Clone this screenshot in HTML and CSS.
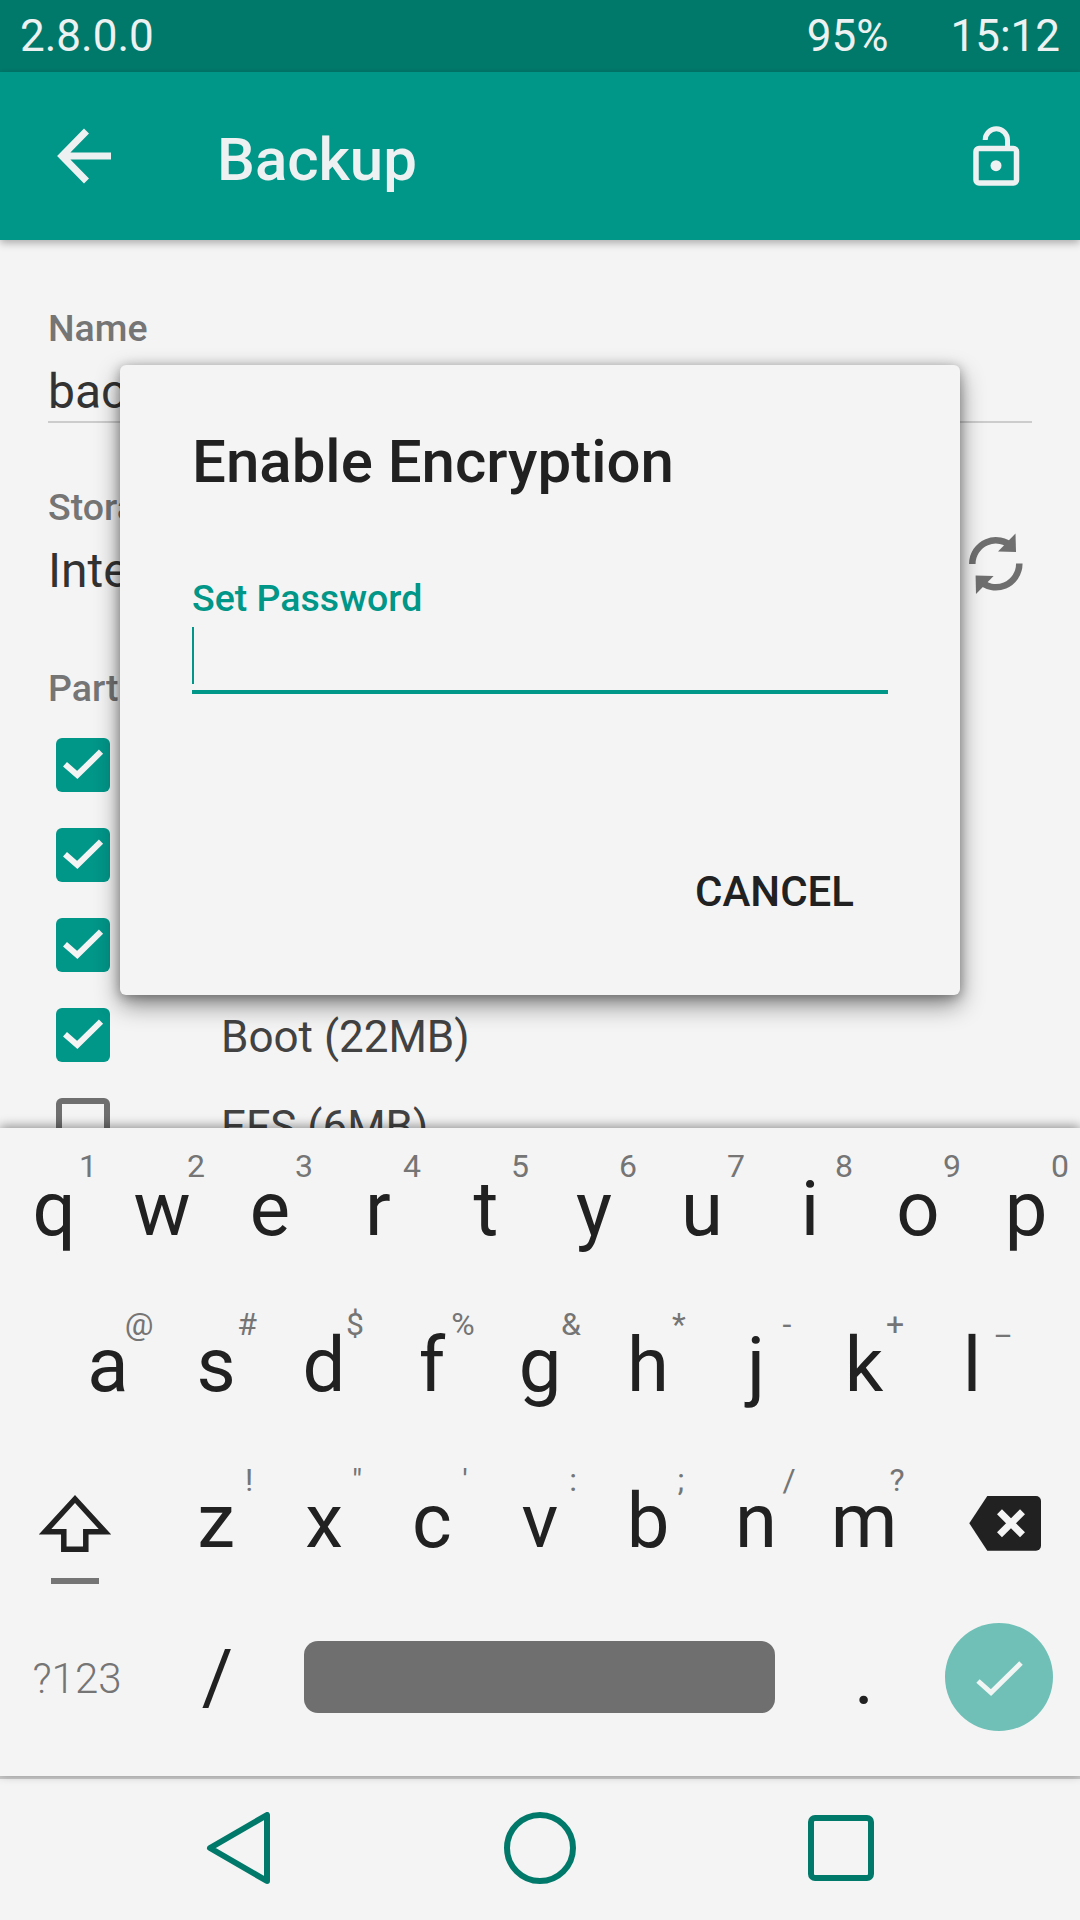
FILE: index.html
```html
<!DOCTYPE html>
<html lang="en">
<head>
    <meta charset="UTF-8">
    <meta name="viewport" content="width=device-width, initial-scale=1.0">
    <title>Backup</title>
    <link rel="stylesheet" href="styles.css">
</head>
<body>
    <div class="screen">
        <div class="status-bar">
            <span class="status-version">2.8.0.0</span>
            <span class="status-battery">95%</span>
            <span>15:12</span>
        </div>

        <header class="toolbar">
            <svg class="toolbar-icon" viewBox="0 0 100 100">
                <path d="M71 46H22M46.5 21L22 46L46.5 71" fill="none" stroke="#eef1f1" stroke-width="7"/>
            </svg>
            <h1 class="toolbar-title">Backup</h1>
            <svg class="toolbar-icon" viewBox="0 0 100 100">
                <rect x="26" y="38.5" width="40.5" height="34.5" rx="3" fill="none" stroke="#eef1f1" stroke-width="5.5"/>
                <path d="M35.2 30A11.15 11.15 0 0 1 57.5 30V37" fill="none" stroke="#eef1f1" stroke-width="5"/>
                <circle cx="46" cy="55.7" r="5.5" fill="#eef1f1"/>
            </svg>
        </header>

        <main class="content">
            <div class="label">Name</div>
            <div class="value name-value">backup</div>

            <div class="label storage-label">Storage</div>
            <div class="storage-row">
                <div class="value">Internal Storage</div>
                <svg class="refresh-icon" viewBox="0 0 100 100">
                    <path d="M27.3 49A23.5 23.5 0 0 1 67.4 32.2" fill="none" stroke="#6f6f6f" stroke-width="6.5"/>
                    <path d="M70.5 18.5L71 37L53 36.5Z" fill="#6f6f6f"/>
                    <path d="M74.3 48.6A23.5 23.5 0 0 1 34.2 65.4" fill="none" stroke="#6f6f6f" stroke-width="6.5"/>
                    <path d="M31 79L30.6 60.6L48.6 61Z" fill="#6f6f6f"/>
                </svg>
            </div>

            <div class="label partitions-label">Partitions</div>
            <ul class="partition-list">
                <li class="partition"><span class="checkbox checked"><svg viewBox="0 0 54 54"><path d="M9 26.3L21.3 37L45 13.7"/></svg></span></li>
                <li class="partition"><span class="checkbox checked"><svg viewBox="0 0 54 54"><path d="M9 26.3L21.3 37L45 13.7"/></svg></span></li>
                <li class="partition"><span class="checkbox checked"><svg viewBox="0 0 54 54"><path d="M9 26.3L21.3 37L45 13.7"/></svg></span></li>
                <li class="partition"><span class="checkbox checked"><svg viewBox="0 0 54 54"><path d="M9 26.3L21.3 37L45 13.7"/></svg></span><span class="partition-name">Boot (22MB)</span></li>
                <li class="partition"><span class="checkbox"></span><span class="partition-name">EFS (6MB)</span></li>
            </ul>
        </main>

        <section class="keyboard">
            <div class="key-row key-row-top">
                <div class="key">q<span class="hint">1</span></div>
                <div class="key">w<span class="hint">2</span></div>
                <div class="key">e<span class="hint">3</span></div>
                <div class="key">r<span class="hint">4</span></div>
                <div class="key">t<span class="hint">5</span></div>
                <div class="key">y<span class="hint">6</span></div>
                <div class="key">u<span class="hint">7</span></div>
                <div class="key">i<span class="hint">8</span></div>
                <div class="key">o<span class="hint">9</span></div>
                <div class="key">p<span class="hint">0</span></div>
            </div>
            <div class="key-row key-row-home">
                <div class="key">a<span class="hint">@</span></div>
                <div class="key">s<span class="hint">#</span></div>
                <div class="key">d<span class="hint">$</span></div>
                <div class="key">f<span class="hint">%</span></div>
                <div class="key">g<span class="hint">&amp;</span></div>
                <div class="key">h<span class="hint">*</span></div>
                <div class="key">j<span class="hint">-</span></div>
                <div class="key">k<span class="hint">+</span></div>
                <div class="key">l<span class="hint">_</span></div>
            </div>
            <div class="key-row key-row-bottom">
                <div class="key key-wide key-shift">
                    <svg width="110" height="120" viewBox="0 0 110 120">
                        <path d="M55 19L25 51.8H43.8V69.2H65.8V51.8H85Z" fill="none" stroke="#212121" stroke-width="5.5" stroke-miterlimit="10"/>
                        <rect x="31" y="98" width="48" height="6" fill="#757575"/>
                    </svg>
                </div>
                <div class="key">z<span class="hint">!</span></div>
                <div class="key">x<span class="hint">"</span></div>
                <div class="key">c<span class="hint">'</span></div>
                <div class="key">v<span class="hint">:</span></div>
                <div class="key">b<span class="hint">;</span></div>
                <div class="key">n<span class="hint">/</span></div>
                <div class="key">m<span class="hint">?</span></div>
                <div class="key key-wide key-delete">
                    <svg width="110" height="90" viewBox="0 0 110 90">
                        <path d="M19.3 43.3L37.3 16H86A5 5 0 0 1 91 21V65.7A5 5 0 0 1 86 70.7H37.3Z" fill="#212121"/>
                        <path d="M49.5 31.8L72.5 54.8M72.5 31.8L49.5 54.8" stroke="#f4f4f4" stroke-width="7"/>
                    </svg>
                </div>
            </div>
            <div class="key-row">
                <div class="key key-wide key-symbols">?123</div>
                <div class="key key-slash">/</div>
                <div class="key key-space"><div class="space-bar"></div></div>
                <div class="key">.</div>
                <div class="key key-wide">
                    <div class="enter-button">
                        <svg width="108" height="108" viewBox="0 0 108 108">
                            <path d="M33 58L46 69.5L76 40" fill="none" stroke="#f1f5f4" stroke-width="5"/>
                        </svg>
                    </div>
                </div>
            </div>
        </section>

        <nav class="nav-bar">
            <div class="nav-item">
                <svg width="72" height="72" viewBox="0 0 72 72"><path d="M8 36L65 3V69Z"/></svg>
            </div>
            <div class="nav-item">
                <svg width="72" height="72" viewBox="0 0 72 72"><circle cx="36" cy="36" r="33"/></svg>
            </div>
            <div class="nav-item">
                <svg width="72" height="72" viewBox="0 0 72 72"><rect x="5" y="6" width="60" height="60" rx="4"/></svg>
            </div>
        </nav>

        <div class="dialog">
            <h2 class="dialog-title">Enable Encryption</h2>
            <label class="dialog-label">Set Password</label>
            <div class="dialog-input"><span class="caret"></span></div>
            <div class="dialog-actions">
                <span class="dialog-button">CANCEL</span>
            </div>
        </div>
    </div>
</body>
</html>
```

FILE: styles.css
```css
* {
    box-sizing: border-box;
}

html, body {
    margin: 0;
    padding: 0;
    background: #f4f4f4;
}

.screen {
    position: relative;
    display: flex;
    flex-direction: column;
    width: 1080px;
    height: 1920px;
    overflow: hidden;
    font-family: Roboto, "Noto Sans", sans-serif;
    color: #212121;
}

/* Status bar */
.status-bar {
    display: flex;
    align-items: center;
    height: 72px;
    padding: 0 20px;
    background: #00796b;
    color: #eef1f1;
    font-size: 44px;
}

.status-version {
    margin-right: auto;
}

.status-battery {
    margin-right: 62px;
}

/* Toolbar */
.toolbar {
    position: relative;
    z-index: 2;
    display: flex;
    align-items: center;
    height: 168px;
    padding: 8px 30px 0 40px;
    background: #009688;
    box-shadow: 0 3px 8px rgba(0, 0, 0, 0.3);
}

.toolbar-icon {
    width: 100px;
    height: 100px;
    flex: none;
}

.toolbar-title {
    flex: 1;
    margin: 0 0 2px 77px;
    color: #eef1f1;
    font-size: 60px;
    font-weight: 500;
}

/* Form behind the dialog */
.content {
    flex: 1;
    min-height: 0;
    overflow: hidden;
    padding: 66px 48px 0;
}

.label {
    color: #757575;
    font-size: 37.5px;
    font-weight: 500;
    line-height: 44px;
}

.value {
    color: #333;
    font-size: 48px;
    line-height: 60px;
}

.name-value {
    margin-top: 12px;
    height: 61px;
    border-bottom: 2px solid #ccc;
}

.storage-label {
    margin-top: 62px;
}

.storage-row {
    display: flex;
    align-items: center;
    justify-content: space-between;
    height: 60px;
    margin-top: 12px;
}

.refresh-icon {
    width: 100px;
    height: 100px;
    margin: 0 -13px 12px 0;
    flex: none;
}

.partitions-label {
    margin-top: 65px;
}

.partition-list {
    margin: 10px 0 0;
    padding: 0;
    list-style: none;
}

.partition {
    display: flex;
    align-items: center;
    height: 90px;
}

.checkbox {
    width: 54px;
    height: 54px;
    margin-left: 8px;
    border: 6px solid #6f6f6f;
    border-radius: 6px;
    flex: none;
}

.checkbox.checked {
    border: none;
    background: #009688;
}

.checkbox svg {
    display: block;
    fill: none;
    stroke: #f4f4f4;
    stroke-width: 6;
}

.partition-name {
    margin-left: 111px;
    padding-top: 4px;
    color: #424242;
    font-size: 44px;
}

/* Keyboard */
.keyboard {
    position: relative;
    z-index: 1;
    height: 648px;
    padding: 3px 0 21px;
    background: #f4f4f4;
    box-shadow: 0 -2px 10px rgba(0, 0, 0, 0.4);
}

.key-row {
    display: flex;
    height: 156px;
}

.key-row-home {
    padding-left: 54px;
}

.key {
    position: relative;
    display: flex;
    align-items: center;
    justify-content: center;
    width: 108px;
    flex: none;
    font-size: 76px;
    line-height: 1;
}

.hint {
    position: absolute;
    top: 17px;
    left: 60px;
    width: 56px;
    color: #757575;
    font-size: 32px;
    line-height: 40px;
    text-align: center;
}

.key-row-top .hint {
    top: 15px;
}

.key-row-home .hint {
    left: 57px;
}

.key-row-bottom .hint {
    left: 59px;
}

.key-wide {
    width: 162px;
}

.key-shift,
.key-delete {
    display: block;
    padding-top: 37px;
}

.key-shift {
    padding-left: 20px;
}

.key-delete {
    padding-left: 32px;
}

.key-symbols {
    padding: 4px 8px 0 0;
    color: #757575;
    font-size: 42px;
    font-weight: 300;
}

.key-slash {
    padding-left: 3px;
}

.key-space {
    width: 540px;
    padding-right: 2px;
}

.space-bar {
    width: 471px;
    height: 72px;
    border-radius: 14px;
    background: #6f6f6f;
}

.enter-button {
    width: 108px;
    height: 108px;
    border-radius: 50%;
    background: #70c0b7;
}

.enter-button svg {
    display: block;
}

/* Navigation bar */
.nav-bar {
    display: flex;
    align-items: center;
    justify-content: center;
    height: 144px;
    padding-bottom: 4px;
    border-top: 3px solid #ccc;
    background: #f4f4f4;
}

.nav-item {
    display: flex;
    justify-content: center;
    width: 302px;
}

.nav-item svg {
    fill: none;
    stroke: #00796b;
    stroke-width: 6;
    stroke-linejoin: round;
}

/* Dialog */
.dialog {
    position: absolute;
    top: 365px;
    left: 120px;
    z-index: 1;
    width: 840px;
    height: 630px;
    padding: 57px 72px 0;
    border-radius: 6px;
    background: #f4f4f4;
    box-shadow: 0 10px 24px rgba(0, 0, 0, 0.45), 0 2px 12px rgba(0, 0, 0, 0.3);
}

.dialog-title {
    margin: 0;
    font-size: 60px;
    font-weight: 500;
    line-height: 80px;
}

.dialog-label {
    display: block;
    margin-top: 74px;
    color: #009688;
    font-size: 37.5px;
    font-weight: 500;
    line-height: 44px;
}

.dialog-input {
    height: 74px;
    padding-top: 7px;
    border-bottom: 4px solid #009688;
}

.caret {
    display: block;
    width: 2px;
    height: 57px;
    background: #009688;
}

.dialog-actions {
    display: flex;
    justify-content: flex-end;
    margin-top: 173px;
    padding-right: 34px;
}

.dialog-button {
    font-size: 42px;
    font-weight: 500;
    line-height: 50px;
}
```
